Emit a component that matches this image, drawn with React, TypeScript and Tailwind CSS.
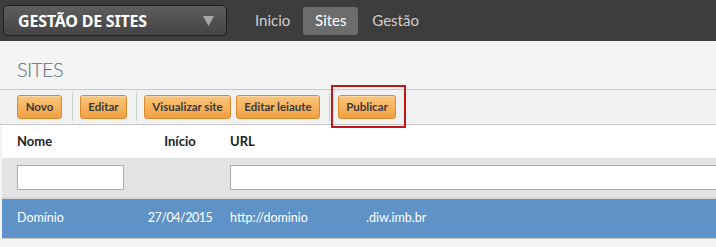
import React from "react";

const font = { fontFamily: 'Lato, "Noto Sans", Arial, sans-serif' };
const noto = { fontFamily: '"Noto Sans", "Open Sans", Arial, sans-serif' };

function Btn({ children, w }: { children: React.ReactNode; w: string }) {
  return (
    <div
      className={`${w} h-[24px] flex items-center justify-center rounded-[3px] border border-[#d98b2b] bg-gradient-to-b from-[#fcc57c] to-[#f0a13f] text-[11.5px] font-bold text-[#3a3a3a] shadow-[inset_0_1px_0_rgba(255,255,255,0.35)]`}
    >
      {children}
    </div>
  );
}

function Sep() {
  return <div className="w-px h-[28px] bg-[#cbcbcb]" />;
}

export default function App() {
  return (
    <div className="w-[716px] h-[247px] bg-[#f4f4f4] overflow-hidden" style={font}>
      {/* top bar */}
      <div className="h-[41px] bg-[#3d3d3d] flex items-start">
        <div className="ml-[3px] mt-[5px] w-[224px] h-[31px] rounded-[4px] border border-[#1e1e1e] bg-gradient-to-b from-[#5e5e5e] to-[#444444] flex items-center pl-[14px] pr-[12px]">
          <span className="text-[16px] font-bold text-white tracking-[-0.2px] flex-1" style={noto}>GESTÃO DE SITES</span>
          <svg width="11" height="10" viewBox="0 0 11 10">
            <path d="M0 0 H11 L5.5 10 Z" fill="#a8a8a8" />
          </svg>
        </div>
        <div className="flex items-center h-[41px] ml-[28px] text-[15px] text-[#cfcfcf]">
          <span className="mr-[13px]">Inicio</span>
          <span className="w-[55px] h-[28px] rounded-[3px] bg-[#6c6c6c] text-white flex items-center justify-center">Sites</span>
          <span className="ml-[14px]">Gestão</span>
        </div>
      </div>
      {/* title */}
      <div className="h-[48px] flex items-center pl-[17px]">
        <span className="text-[20px] text-[#5b6b7b] font-light mt-[8px] tracking-[-0.8px]">SITES</span>
      </div>
      {/* toolbar */}
      <div className="h-[36px] border-t border-b border-[#c8c8c8] bg-[#f1f1f1] flex items-center pl-[17px]">
        <Btn w="w-[45px]">Novo</Btn>
        <div className="ml-[10px] mr-[7px]"><Sep /></div>
        <Btn w="w-[47px]">Editar</Btn>
        <div className="ml-[9px] mr-[7px]"><Sep /></div>
        <Btn w="w-[87px]">Visualizar site</Btn>
        <div className="ml-[5px]" />
        <Btn w="w-[84px]">Editar leiaute</Btn>
        <div className="ml-[9px] mr-[8px]"><Sep /></div>
        <div className="relative">
          <Btn w="w-[58px]">Publicar</Btn>
          <div className="absolute left-[-7px] top-[-10px] w-[75px] h-[43px] border-2 border-[#c4141c]" />
        </div>
      </div>
      {/* table header */}
      <div className="ml-[2px] h-[33px] bg-white flex items-center text-[13px] font-bold text-[#222]">
        <div className="w-[132px] pl-[15px]">Nome</div>
        <div className="w-[92px] text-center">Início</div>
        <div className="pl-[4px]">URL</div>
      </div>
      {/* filter row */}
      <div className="ml-[2px] h-[41px] bg-[#e3e3e3] flex items-center border-b-2 border-[#d6d6d6]">
        <div className="w-[132px] pl-[15px]">
          <div className="w-[107px] h-[25px] bg-white border border-[#aaaaaa]" />
        </div>
        <div className="w-[92px]" />
        <div className="pl-[4px] flex-1">
          <div className="w-full h-[25px] bg-white border border-[#aaaaaa] border-r-0" />
        </div>
      </div>
      {/* selected row */}
      <div className="ml-[2px] h-[40px] bg-[#5f92c6] flex items-center text-[12.5px] text-white border-b border-[#c9c9c9]">
        <div className="w-[132px] pl-[15px]">Domínio</div>
        <div className="w-[92px] text-center tracking-[-0.5px]">27/04/2015</div>
        <div className="pl-[4px] flex">
          <span className="w-[136px]">http://dominio</span>
          <span>.diw.imb.br</span>
        </div>
      </div>
    </div>
  );
}
